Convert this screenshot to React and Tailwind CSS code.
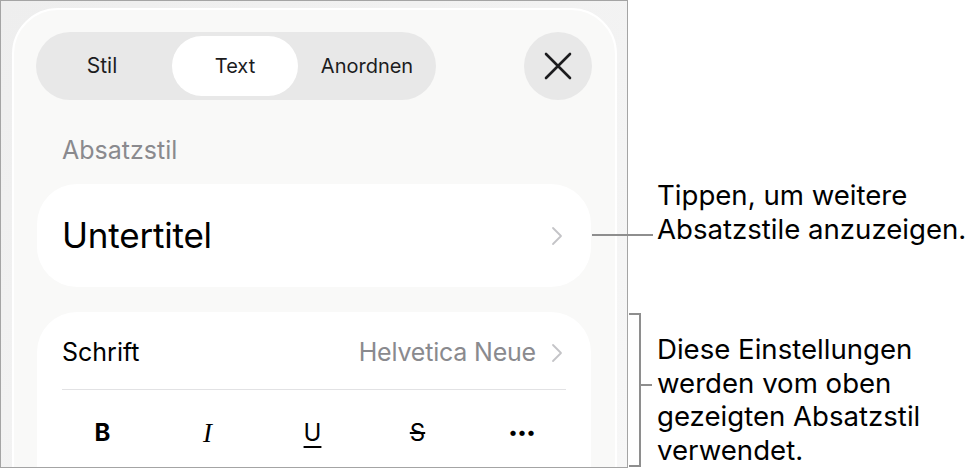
import React from "react";

const Chevron = ({ className = "" }) => (
  <svg width="12" height="20" viewBox="0 0 12 20" fill="none" className={className}>
    <path d="M2 2 L10 10 L2 18" stroke="#c4c4c7" strokeWidth="1.8" strokeLinecap="round" strokeLinejoin="round" />
  </svg>
);

const CloseIcon = () => (
  <svg width="28" height="28" viewBox="0 0 28 28" fill="none">
    <path d="M2 2 L26 26 M26 2 L2 26" stroke="#1c1c1e" strokeWidth="2.6" strokeLinecap="round" />
  </svg>
);

const Panel = () => (
  <div className="w-[628px] h-[468px] border border-[#a4a4a4] bg-gradient-to-br from-[#eeeeee] to-[#f7f7f7] overflow-hidden shrink-0">
    <div className="ml-[11px] mt-[7px] w-[605px] h-[520px] rounded-[46px] border-2 border-white bg-[#f9f9f8] pt-[22px] pl-[22px] pr-[22px]">
      {/* Tabs + close */}
      <div className="flex items-center justify-between">
        <div className="flex items-center h-[68px] w-[400px] rounded-full bg-[#e8e8e8] px-[4px] text-[20px] text-[#1c1c1e]">
          <div className="w-[124px] text-center text-[21px]">Stil</div>
          <div className="w-[126px] h-[60px] ml-[8px] rounded-full bg-white flex items-center justify-center">Text</div>
          <div className="w-[134px] text-center pl-[4px]">Anordnen</div>
        </div>
        <div className="w-[68px] h-[68px] rounded-full bg-[#e8e8e8] flex items-center justify-center mr-[1px]">
          <CloseIcon />
        </div>
      </div>

      <div className="mt-[34px] pl-[26px] text-[25px] text-[#8a8a8e] leading-[32px]">Absatzstil</div>

      {/* Absatzstil card */}
      <div className="mt-[18px] ml-[1px] w-[554px] h-[103px] rounded-[40px] bg-white flex items-center justify-between pl-[25px] pr-[28px]">
        <span className="text-[35px] text-black tracking-[-0.2px]">Untertitel</span>
        <Chevron />
      </div>

      {/* Font card */}
      <div className="mt-[25px] ml-[1px] w-[554px] h-[200px] rounded-[40px] bg-white">
        <div className="mx-[25px] h-[78px] pt-[4px] flex items-center justify-between border-b border-[#e2e2e4]">
          <span className="text-[25px] text-black">Schrift</span>
          <div className="flex items-center gap-[15px] mr-[3px]">
            <span className="text-[25px] text-[#8a8a8e] tracking-[-0.2px]">Helvetica Neue</span>
            <Chevron />
          </div>
        </div>
        <div className="grid grid-cols-[105px_105px_105px_105px_105px] pl-[13px] h-[86px] items-center text-[24px] text-black">
          <span className="text-center font-bold">B</span>
          <span className="text-center italic text-[27px]" style={{ fontFamily: "'Liberation Serif', serif" }}>I</span>
          <span className="text-center underline underline-offset-[5px] decoration-[1.5px]">U</span>
          <span className="text-center line-through decoration-[1.5px]">S</span>
          <span className="text-center font-bold tracking-[1px] text-[17px]">•••</span>
        </div>
      </div>
    </div>
  </div>
);

export default function App() {
  return (
    <div className="relative w-[971px] h-[471px] bg-white flex" style={{ fontFamily: "Inter, 'Noto Sans', sans-serif" }}>
      <Panel />

      {/* callout lines */}
      <div className="absolute left-[592px] top-[234px] w-[61px] h-[2px] bg-[#8e8e8e]" />
      <div className="absolute left-[629px] top-[313px] w-[12px] h-[154px] border-t-2 border-r-2 border-b-2 border-[#8e8e8e]" />
      <div className="absolute left-[641px] top-[384px] w-[11px] h-[2px] bg-[#8e8e8e]" />

      <div className="pl-[29px] text-[27.6px] leading-[34px] text-black">
        <div className="mt-[178px]">
          Tippen, um weitere
          <br />
          Absatzstile anzuzeigen.
        </div>
        <div className="mt-[87px] leading-[33.5px]">
          Diese Einstellungen
          <br />
          werden vom oben
          <br />
          gezeigten Absatzstil
          <br />
          verwendet.
        </div>
      </div>
    </div>
  );
}
